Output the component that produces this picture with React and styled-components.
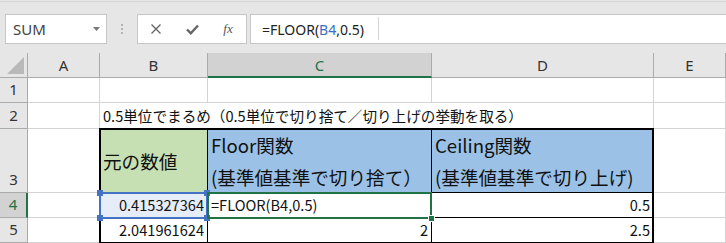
import React from "react";
import styled, { createGlobalStyle } from "styled-components";

const Global = createGlobalStyle`
  body {
    margin: 0;
    background: #ffffff;
    overflow: hidden;
  }
`;

const JP = `"Noto Sans CJK JP", "Noto Sans", sans-serif`;
const UI = `"Noto Sans", "Liberation Sans", sans-serif`;
const GREEN = "#217346";
const BLUE = "#4472c4";

const Wrap = styled.div`
  width: 726px;
  height: 243px;
  overflow: hidden;
  background: #e6e6e6;
`;

const Toolbar = styled.div`
  display: flex;
  align-items: stretch;
  height: 52px;
  box-sizing: border-box;
  padding: 12px 0 9px 5px;
  border-top: 1px solid #d6d6d6;
  margin-top: 1px;
`;

const Box = styled.div`
  display: flex;
  align-items: center;
  background: #fff;
  border: 1px solid #c6c6c6;
  box-sizing: border-box;
  width: ${(p) => p.w || "auto"};
  flex: ${(p) => (p.grow ? 1 : "none")};
  margin-right: ${(p) => p.mr || "0"};
`;

const NameText = styled.span`
  font-family: ${UI};
  font-size: 15px;
  color: #444;
  padding-left: 7px;
  flex: 1;
`;

const Grip = styled.div`
  width: 30px;
  display: flex;
  flex-direction: column;
  align-items: center;
  justify-content: center;
  gap: 2px;
  span {
    width: 2px;
    height: 2px;
    background: #b4b4b4;
  }
`;

const IconBtn = styled.div`
  width: 36px;
  display: flex;
  align-items: center;
  justify-content: center;
  color: #666;
`;

const Fx = styled.span`
  font-family: "Liberation Serif", serif;
  font-style: italic;
  font-size: 13px;
  color: #555;
`;

const Formula = styled.div`
  font-family: ${UI};
  font-size: 14px;
  color: #222;
  padding-left: 11px;
  height: 100%;
  display: flex;
  align-items: center;
`;

const Caret = styled.div`
  width: 1px;
  align-self: stretch;
  margin: 2px 0 3px 14px;
  background: #d4d4d4;
`;

const Ref = styled.span`
  color: #3a6fc4;
`;

const Sheet = styled.div`
  display: grid;
  grid-template-columns: 28px 72px 108px 224px 222px 1fr;
  grid-template-rows: 25px 25px 26px 64px 25px 25px;
  background: #fff;
`;

const Head = styled.div`
  grid-column: ${(p) => p.col};
  grid-row: ${(p) => p.row};
  background: ${(p) => (p.active ? "#d2d2d2" : "#e6e6e6")};
  color: ${(p) => (p.active ? GREEN : "#333")};
  font-family: ${UI};
  font-size: 15px;
  display: flex;
  justify-content: center;
  align-items: ${(p) => (p.bottom ? "flex-end" : "center")};
  padding-bottom: ${(p) => (p.bottom ? "3px" : "0")};
  box-sizing: border-box;
  border-right: ${(p) => (p.activeRow ? `2px solid ${GREEN}` : "1px solid #ababab")};
  border-bottom: ${(p) => (p.activeCol ? `2px solid ${GREEN}` : "1px solid #ababab")};
`;

const Cell = styled.div`
  grid-column: ${(p) => p.col};
  grid-row: ${(p) => p.row};
  background: ${(p) => p.bg || "transparent"};
  box-sizing: border-box;
  border-right: 1px solid ${(p) => (p.dark ? "#000" : "#d4d4d4")};
  border-bottom: 1px solid ${(p) => (p.dark ? "#000" : "#d4d4d4")};
  display: flex;
  align-items: center;
  justify-content: ${(p) => (p.right ? "flex-end" : "flex-start")};
  padding: 0 3px;
  font-family: ${JP};
  font-size: ${(p) => (p.big ? "18.6px" : "14.6px")};
  line-height: ${(p) => (p.big ? "32px" : "1.2")};
  color: #111;
  white-space: pre;
`;

const Lines = styled.div`
  display: flex;
  flex-direction: column;
`;

const Frame = styled.div`
  grid-column: 3 / 6;
  grid-row: 4 / 7;
  border: 2px solid #000;
  margin: -1px 0 -2px -1px;
  z-index: 2;
  pointer-events: none;
`;

const Select = styled.div`
  grid-column: ${(p) => p.col};
  grid-row: ${(p) => p.row};
  border: 2px solid ${(p) => p.color};
  margin: -1px 0 -1px -1px;
  position: relative;
  z-index: 3;
  pointer-events: none;
`;

const Handle = styled.span`
  position: absolute;
  width: 6px;
  height: 6px;
  background: ${(p) => p.color};
  border: ${(p) => (p.ring ? "1px solid #fff" : "none")};
  ${(p) => p.pos}
`;

const Corner = styled.div`
  grid-column: 1;
  grid-row: 1;
  background: #e6e6e6;
  border-right: 1px solid #ababab;
  border-bottom: 1px solid #ababab;
  box-sizing: border-box;
  display: flex;
  align-items: flex-end;
  justify-content: flex-end;
  padding: 0 3px 3px 0;
`;

const cols = ["A", "B", "C", "D", "E"];

export default function App() {
  return (
    <Wrap>
      <Global />
      <Toolbar>
        <Box w="102px">
          <NameText>SUM</NameText>
          <svg width="16" height="10" viewBox="0 0 16 10">
            <path d="M3 3h7l-3.5 4z" fill="#777" />
          </svg>
        </Box>
        <Grip>
          <span />
          <span />
          <span />
        </Grip>
        <Box w="110px" mr="3px">
          <IconBtn>
            <svg width="12" height="12" viewBox="0 0 12 12">
              <path d="M1.5 1.5l9 9M10.5 1.5l-9 9" stroke="#666" strokeWidth="1.4" />
            </svg>
          </IconBtn>
          <IconBtn>
            <svg width="13" height="11" viewBox="0 0 13 11">
              <path d="M1 5.5l3.8 3.8L12 1.5" stroke="#666" strokeWidth="2.4" fill="none" />
            </svg>
          </IconBtn>
          <IconBtn>
            <Fx>fx</Fx>
          </IconBtn>
        </Box>
        <Box grow style={{ marginRight: "-2px" }}>
          <Formula>
            =FLOOR(<Ref>B4</Ref>,0.5)
          </Formula>
          <Caret />
        </Box>
      </Toolbar>
      <Sheet>
        <Corner>
          <svg width="17" height="17" viewBox="0 0 17 17">
            <path d="M17 0V17H0z" fill="#b9b9b9" />
          </svg>
        </Corner>
        {cols.map((c, i) => (
          <Head key={c} col={i + 2} row={1} active={c === "C"} activeCol={c === "C"}>
            {c}
          </Head>
        ))}
        {[1, 2, 3, 4, 5].map((n) => (
          <Head key={n} col={1} row={n + 1} bottom active={n === 4} activeRow={n === 4}>
            {n}
          </Head>
        ))}

        {/* row 1 */}
        <Cell col={2} row={2} />
        <Cell col={3} row={2} />
        <Cell col={4} row={2} />
        <Cell col={5} row={2} />
        <Cell col={6} row={2} />

        {/* row 2 */}
        <Cell col={2} row={3} />
        <Cell col="3 / 6" row={3}>
          0.5単位でまるめ（0.5単位で切り捨て／切り上げの挙動を取る）
        </Cell>
        <Cell col={6} row={3} />

        {/* row 3 */}
        <Cell col={2} row={4} />
        <Cell col={3} row={4} bg="#c6e0b4" dark big>
          元の数値
        </Cell>
        <Cell col={4} row={4} bg="#9bc2e6" dark big>
          <Lines>
            <span>Floor関数</span>
            <span>(基準値基準で切り捨て）</span>
          </Lines>
        </Cell>
        <Cell col={5} row={4} bg="#9bc2e6" dark big>
          <Lines>
            <span>Ceiling関数</span>
            <span>(基準値基準で切り上げ)</span>
          </Lines>
        </Cell>
        <Cell col={6} row={4} />

        {/* row 4 */}
        <Cell col={2} row={5} />
        <Cell col={3} row={5} bg="#e6edf8" dark right>
          0.415327364
        </Cell>
        <Cell col={4} row={5} dark>
          =FLOOR(B4,0.5)
        </Cell>
        <Cell col={5} row={5} dark right>
          0.5
        </Cell>
        <Cell col={6} row={5} />

        {/* row 5 */}
        <Cell col={2} row={6} />
        <Cell col={3} row={6} dark right>
          2.041961624
        </Cell>
        <Cell col={4} row={6} dark right>
          2
        </Cell>
        <Cell col={5} row={6} dark right>
          2.5
        </Cell>
        <Cell col={6} row={6} />

        <Frame />
        <Select col={3} row={5} color={BLUE}>
          <Handle color={BLUE} pos="left:-4px;top:-4px;" />
          <Handle color={BLUE} pos="right:-4px;top:-4px;" />
          <Handle color={BLUE} pos="left:-4px;bottom:-4px;" />
          <Handle color={BLUE} pos="right:-4px;bottom:-4px;" />
        </Select>
        <Select col={4} row={5} color={GREEN}>
          <Handle color={GREEN} ring pos="right:-5px;bottom:-5px;width:5px;height:5px;" />
        </Select>
      </Sheet>
    </Wrap>
  );
}
